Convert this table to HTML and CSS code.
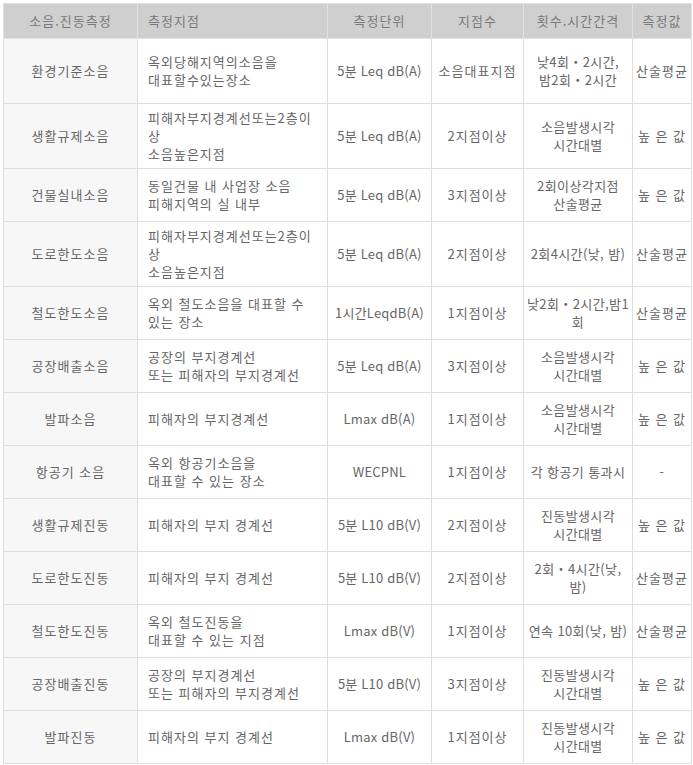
FILE: index.html
```html
<!DOCTYPE html>
<html lang="ko">
<head>
<meta charset="utf-8">
<link rel="stylesheet" href="styles.css">
</head>
<body>
<div class="wrap">
<table class="tbl">
<colgroup>
<col class="c1"><col class="c2"><col class="c3"><col class="c4"><col class="c5"><col class="c6">
</colgroup>
<thead>
<tr><th>소음.진동측정</th><th class="left">측정지점</th><th>측정단위</th><th>지점수</th><th>횟수.시간간격</th><th>측정값</th></tr>
</thead>
<tbody>
<tr class="tall"><td class="name">환경기준소음</td><td class="left">옥외당해지역의소음을<br>대표할수있는장소</td><td class="unit">5분 Leq dB(A)</td><td>소음대표지점</td><td class="time">낮4회・2시간,<br>밤2회・2시간</td><td>산술평균</td></tr>
<tr class="tall"><td class="name">생활규제소음</td><td class="left">피해자부지경계선또는2층이<br>상<br>소음높은지점</td><td class="unit">5분 Leq dB(A)</td><td>2지점이상</td><td class="time">소음발생시각<br>시간대별</td><td>높 은 값</td></tr>
<tr><td class="name">건물실내소음</td><td class="left">동일건물 내 사업장 소음<br>피해지역의 실 내부</td><td class="unit">5분 Leq dB(A)</td><td>3지점이상</td><td class="time">2회이상각지점<br>산술평균</td><td>높 은 값</td></tr>
<tr class="tall"><td class="name">도로한도소음</td><td class="left">피해자부지경계선또는2층이<br>상<br>소음높은지점</td><td class="unit">5분 Leq dB(A)</td><td>2지점이상</td><td class="time">2회4시간(낮, 밤)</td><td>산술평균</td></tr>
<tr><td class="name">철도한도소음</td><td class="left">옥외 철도소음을 대표할 수<br>있는 장소</td><td class="unit">1시간LeqdB(A)</td><td>1지점이상</td><td class="time">낮2회・2시간,밤1<br>회</td><td>산술평균</td></tr>
<tr><td class="name">공장배출소음</td><td class="left">공장의 부지경계선<br>또는 피해자의 부지경계선</td><td class="unit">5분 Leq dB(A)</td><td>3지점이상</td><td class="time">소음발생시각<br>시간대별</td><td>높 은 값</td></tr>
<tr><td class="name">발파소음</td><td class="left">피해자의 부지경계선</td><td class="unit">Lmax dB(A)</td><td>1지점이상</td><td class="time">소음발생시각<br>시간대별</td><td>높 은 값</td></tr>
<tr><td class="name">항공기 소음</td><td class="left">옥외 항공기소음을<br>대표할 수 있는 장소</td><td class="unit">WECPNL</td><td>1지점이상</td><td class="time">각 항공기 통과시</td><td>-</td></tr>
<tr><td class="name">생활규제진동</td><td class="left">피해자의 부지 경계선</td><td class="unit">5분 L10 dB(V)</td><td>2지점이상</td><td class="time">진동발생시각<br>시간대별</td><td>높 은 값</td></tr>
<tr><td class="name">도로한도진동</td><td class="left">피해자의 부지 경계선</td><td class="unit">5분 L10 dB(V)</td><td>2지점이상</td><td class="time">2회・4시간(낮,<br>밤)</td><td>산술평균</td></tr>
<tr><td class="name">철도한도진동</td><td class="left">옥외 철도진동을<br>대표할 수 있는 지점</td><td class="unit">Lmax dB(V)</td><td>1지점이상</td><td class="time">연속 10회(낮, 밤)</td><td>산술평균</td></tr>
<tr><td class="name">공장배출진동</td><td class="left">공장의 부지경계선<br>또는 피해자의 부지경계선</td><td class="unit">5분 L10 dB(V)</td><td>3지점이상</td><td class="time">진동발생시각<br>시간대별</td><td>높 은 값</td></tr>
<tr><td class="name">발파진동</td><td class="left">피해자의 부지 경계선</td><td class="unit">Lmax dB(V)</td><td>1지점이상</td><td class="time">진동발생시각<br>시간대별</td><td>높 은 값</td></tr>
</tbody>
</table>
</div>
</body>
</html>
```

FILE: styles.css
```css
html, body {
  margin: 0;
  padding: 0;
  background: #ffffff;
}
.wrap {
  padding: 3px 0 0 3px;
}
.tbl {
  border-collapse: collapse;
  table-layout: fixed;
  width: 688px;
  font-family: "Noto Sans CJK KR", "Noto Sans", sans-serif;
  font-size: 13px;
  line-height: 18px;
  letter-spacing: 1px;
  color: #666666;
}
.c1 { width: 134px; }
.c2 { width: 190px; }
.c3 { width: 104px; }
.c4 { width: 92px; }
.c5 { width: 109px; }
.c6 { width: 59px; }
.tbl th, .tbl td {
  border: 1px solid #dedede;
  text-align: center;
  vertical-align: middle;
  padding: 0;
  white-space: nowrap;
  overflow: hidden;
}
.tbl th {
  background: #cfcfcf;
  color: #7a7a7a;
  font-weight: normal;
  height: 34px;
  border-color: #e2e2e2;
  border-top-color: #dedede;
}
.tbl td {
  height: 52px;
}
.tbl tr.tall td {
  height: 64px;
}
.tbl .left {
  text-align: left;
  padding-left: 10px;
}
.tbl td.name {
  background: #f7f7f7;
}
.tbl td.unit {
  letter-spacing: 0.2px;
}
.tbl td.time {
  letter-spacing: 0.4px;
}
```
